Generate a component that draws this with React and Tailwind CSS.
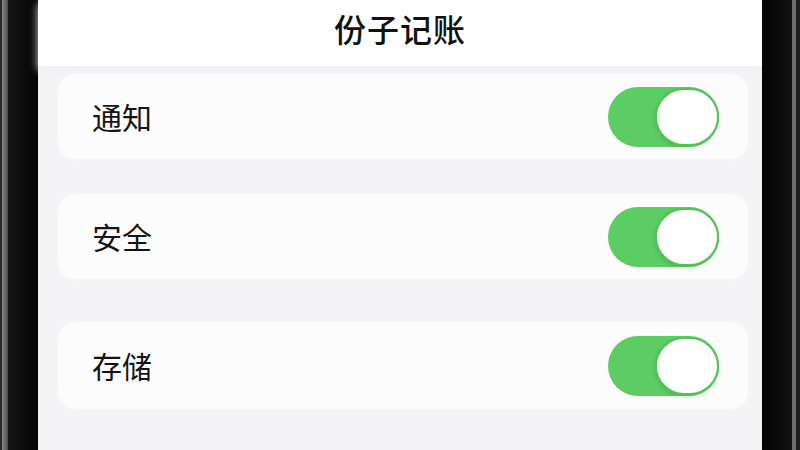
import React, { useState } from "react";

const FONT = { fontFamily: '"Noto Sans CJK SC", "Noto Sans", sans-serif' };

const ROWS = [
  { key: "notify", label: "通知", gap: "mt-[8px]", h: "h-[85px]" },
  { key: "security", label: "安全", gap: "mt-[35px]", h: "h-[85px]" },
  { key: "storage", label: "存储", gap: "mt-[43px]", h: "h-[87px]" },
];

function Toggle({ on, onChange }) {
  return (
    <button
      type="button"
      onClick={onChange}
      className={`relative w-[111px] h-[60px] rounded-full flex items-center ${on ? "bg-[#5ccd62]" : "bg-[#e5e5ea]"}`}
    >
      <span
        className={`absolute top-[1px] w-[64px] h-[58px] rounded-full bg-white border-2 border-[#55c25c] shadow-[0_2px_4px_rgba(0,0,0,0.12)] ${on ? "right-0" : "left-0"}`}
      />
    </button>
  );
}

function SettingRow({ label, on, onToggle, className }) {
  return (
    <div className={`rounded-[18px] bg-[#fcfcfd] shadow-[0_0_6px_rgba(250,250,252,0.9)] flex items-center justify-between pl-[34px] pr-[29px] ${className}`}>
      <span className="text-[30px] text-[#141414]">{label}</span>
      <Toggle on={on} onChange={onToggle} />
    </div>
  );
}

export default function App() {
  const [state, setState] = useState({ notify: true, security: true, storage: true });

  return (
    <div className="w-[800px] h-[450px] flex overflow-hidden bg-black" style={FONT}>
      {/* left bezel */}
      <div className="w-[38px] h-full flex">
        <div className="w-[2px] bg-[#2a2a2a]" />
        <div className="w-[6px] bg-gradient-to-r from-[#8a8a8a] to-[#4a4a4a]" />
        <div className="flex-1 bg-gradient-to-r from-[#151515] to-[#050505]" />
      </div>

      {/* screen */}
      <div className="flex-1 h-full bg-[#f4f4f7] flex flex-col">
        <div className="h-[66px] bg-white flex items-center justify-center pb-[10px] shadow-[0_4px_8px_rgba(240,240,244,0.9)]">
          <h1 className="text-[32px] font-medium text-[#111] tracking-[1px]">份子记账</h1>
        </div>
        <div className="flex flex-col pl-[20px] pr-[14px]">
          {ROWS.map((r) => (
            <SettingRow
              key={r.key}
              label={r.label}
              className={`${r.gap} ${r.h}`}
              on={state[r.key]}
              onToggle={() => setState((s) => ({ ...s, [r.key]: !s[r.key] }))}
            />
          ))}
        </div>
      </div>

      {/* right bezel */}
      <div className="w-[38px] h-full flex">
        <div className="w-[30px] bg-gradient-to-r from-[#050505] to-[#111]" />
        <div className="w-[4px] bg-[#6e6e6e]" />
        <div className="flex-1 bg-[#1e1e1e]" />
      </div>
    </div>
  );
}
